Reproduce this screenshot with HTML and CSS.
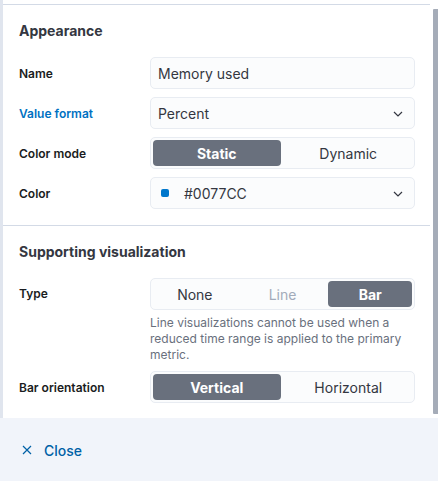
FILE: index.html
```html
<!DOCTYPE html>
<html>
<head>
<meta charset="utf-8">
<link rel="stylesheet" href="styles.css">
</head>
<body>
<div class="main">
  <div class="strip"></div>
  <div class="panel">
    <section class="section">
      <h3 class="title">Appearance</h3>
      <div class="rows">
        <div class="row">
          <label class="label">Name</label>
          <div class="field input">Memory used</div>
        </div>
        <div class="row">
          <label class="label focus">Value format</label>
          <div class="field select">
            <span>Percent</span>
            <svg class="chev" width="10" height="6" viewBox="0 0 10 6"><path d="M1 1 L5 5 L9 1" fill="none" stroke="#343741" stroke-width="1.2"/></svg>
          </div>
        </div>
        <div class="row">
          <label class="label">Color mode</label>
          <div class="group">
            <div class="btn on">Static</div>
            <div class="btn">Dynamic</div>
          </div>
        </div>
        <div class="row">
          <label class="label">Color</label>
          <div class="field select">
            <span class="colorval"><i class="swatch"></i>#0077CC</span>
            <svg class="chev" width="10" height="6" viewBox="0 0 10 6"><path d="M1 1 L5 5 L9 1" fill="none" stroke="#343741" stroke-width="1.2"/></svg>
          </div>
        </div>
      </div>
    </section>
    <section class="section second">
      <h3 class="title">Supporting visualization</h3>
      <div class="rows">
        <div class="row top">
          <label class="label">Type</label>
          <div class="control">
            <div class="group">
              <div class="btn">None</div>
              <div class="btn disabled">Line</div>
              <div class="btn on">Bar</div>
            </div>
            <p class="help">Line visualizations cannot be used when a reduced time range is applied to the primary metric.</p>
          </div>
        </div>
        <div class="row">
          <label class="label">Bar orientation</label>
          <div class="group">
            <div class="btn on">Vertical</div>
            <div class="btn">Horizontal</div>
          </div>
        </div>
      </div>
    </section>
  </div>
  <div class="scroll"><div class="thumb"></div></div>
</div>
<footer class="footer">
  <button class="close">
    <svg width="10" height="10" viewBox="0 0 10 10"><path d="M1 1 L9 9 M9 1 L1 9" stroke="#0061a6" stroke-width="1.2" fill="none"/></svg>
    <span>Close</span>
  </button>
</footer>
</body>
</html>
```
FILE: styles.css
```css
* { box-sizing: border-box; }
html, body { margin: 0; padding: 0; }
body {
  width: 438px;
  height: 481px;
  overflow: hidden;
  background: #fff;
  font-family: Inter, "Noto Sans", sans-serif;
  color: #1a1c21;
}
.main {
  display: flex;
  height: 418px;
}
.strip {
  width: 3px;
  background: #e0e5ee;
}
.panel {
  width: 427px;
  margin-top: 4px;
  border-top: 1px solid #d3dae6;
}
.scroll {
  flex: 1;
  display: flex;
  justify-content: flex-end;
  padding-top: 9px;
  padding-bottom: 4px;
}
.thumb {
  width: 5px;
  background: #a5acb8;
  border-radius: 1px 0 0 1px;
}
.section {
  padding: 16px 15px 16px 16px;
}
.section.second {
  border-top: 1px solid #d3dae6;
  padding-bottom: 0;
}
.title {
  margin: 0 0 16px;
  font-size: 14px;
  line-height: 20px;
  font-weight: 700;
  color: #343741;
}
.rows {
  display: flex;
  flex-direction: column;
  gap: 8px;
}
.row {
  display: flex;
  align-items: center;
}
.row.top { align-items: flex-start; }
.row.top .label { line-height: 32px; }
.label {
  width: 131px;
  flex: none;
  font-size: 12px;
  font-weight: 600;
  color: #1a1c21;
}
.label.focus { color: #0071c2; }
.control { flex: 1; }
.field {
  flex: 1;
  height: 32px;
  background: #fbfcfd;
  border: 1px solid #e8ecf2;
  border-radius: 5px;
  display: flex;
  align-items: center;
  padding: 0 11px 0 7px;
  font-size: 14px;
  color: #343741;
}
.select { justify-content: space-between; }
.chev { margin-top: 1px; }
.colorval { display: flex; align-items: center; }
.swatch {
  display: inline-block;
  width: 8px;
  height: 8px;
  border-radius: 2px;
  background: #0077cc;
  margin: 0 15px 0 3px;
}
.group {
  flex: 1;
  height: 32px;
  display: flex;
  gap: 4px;
  padding: 2px;
  background: #fbfcfd;
  border: 1px solid #e8ecf2;
  border-radius: 5px;
}
.btn {
  flex: 1 1 0;
  display: flex;
  align-items: center;
  justify-content: center;
  font-size: 14px;
  color: #343741;
  border-radius: 4px;
}
.btn.on {
  background: #69707d;
  color: #fff;
  font-weight: 700;
}
.btn.disabled { color: #a2abba; }
.help {
  margin: 0;
  padding-top: 5px;
  font-size: 12px;
  line-height: 16px;
  color: #69707d;
}
.footer {
  height: 63px;
  background: #f1f4fa;
  display: flex;
  align-items: center;
  padding: 0 16px;
}
.close {
  display: flex;
  align-items: center;
  gap: 12px;
  background: none;
  border: 0;
  padding: 0 0 0 6px;
  font-family: Inter, "Noto Sans", sans-serif;
  font-size: 14px;
  font-weight: 500;
  color: #0061a6;
  margin-top: 1px;
}
```
